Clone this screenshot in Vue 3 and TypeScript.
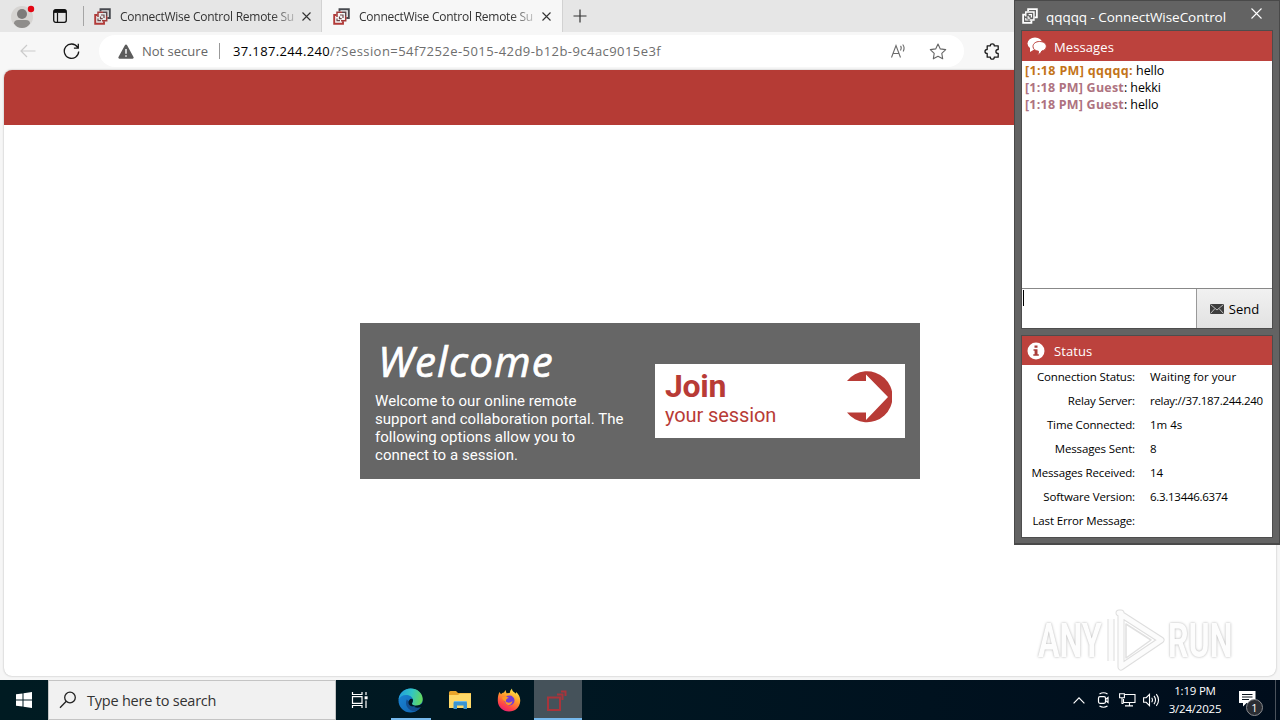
<script setup lang="ts">
interface BrowserTab {
  id: number
  title: string
  active: boolean
}

interface ChatLine {
  time: string
  author: string
  text: string
  host: boolean
}

interface StatusRow {
  label: string
  value: string
  numeric?: boolean
}

const tabs: BrowserTab[] = [
  { id: 1, title: 'ConnectWise Control Remote Su', active: false },
  { id: 2, title: 'ConnectWise Control Remote Su', active: true },
]

const chat: ChatLine[] = [
  { time: '[1:18 PM]', author: 'qqqqq:', text: 'hello', host: true },
  { time: '[1:18 PM]', author: 'Guest', text: 'hekki', host: false },
  { time: '[1:18 PM]', author: 'Guest', text: 'hello', host: false },
]

const status: StatusRow[] = [
  { label: 'Connection Status:', value: 'Waiting for your' },
  { label: 'Relay Server:', value: 'relay://37.187.244.240', numeric: true },
  { label: 'Time Connected:', value: '1m 4s' },
  { label: 'Messages Sent:', value: '8' },
  { label: 'Messages Received:', value: '14' },
  { label: 'Software Version:', value: '6.3.13446.6374', numeric: true },
  { label: 'Last Error Message:', value: '' },
]
</script>

<template>
  <div class="desktop">
    <section class="browser">
      <div class="tabstrip">
        <div class="profile">
          <svg width="28" height="28" viewBox="0 0 28 28">
            <circle cx="11" cy="15" r="11" fill="#d6d4d2" />
            <circle cx="11" cy="12" r="5" fill="#7d7b7a" />
            <path d="M3 21.500q0-3.500 4-3.500h8q4 0 4 3.500-3 4.500-8 4.500t-8-4.500z" fill="#8f8d8b" />
            <circle cx="20" cy="7" r="3.200" fill="#e30613" />
          </svg>
        </div>
        <svg class="workspace" width="14" height="14" viewBox="0 0 14 14" fill="none" stroke="#111">
          <rect x=".7" y=".7" width="12.600" height="12.600" rx="2" stroke-width="1.300" />
          <path d="M1 2.400h12" stroke-width="3" />
          <path d="M4.500 4v9" stroke-width="1.200" />
        </svg>
        <i class="divider"></i>
        <div v-for="tab in tabs" :key="tab.id" class="tab" :class="{ active: tab.active }">
          <svg class="favicon" width="17" height="17" viewBox="0 0 17 17" fill="none">
            <path d="M6.500 3.500V1.200h9.300V10h-2.500" stroke="#47494f" stroke-width="1.900" />
            <path d="M3.500 7H1.200v8.800H10v-2.500" stroke="#b23a38" stroke-width="1.900" />
            <path d="M4 9V4.300h5M12.700 8v4.700H8" stroke="#a23b3a" stroke-width="1.500" />
            <path d="M9 4.300h3.700V8" stroke="#5b474b" stroke-width="1.500" />
            <path d="M7 7h3v3M6.500 8.500v2.200h2.200M4 10.500v2.200h3" stroke="#6e4a4d" stroke-width="1.200" />
          </svg>
          <span class="tab-title">{{ tab.title }}</span>
          <svg class="tab-close" width="9" height="9" viewBox="0 0 9 9"><path d="M.5.500l8 8M8.500.500l-8 8" stroke="#333" stroke-width="1.100" /></svg>
        </div>
        <svg class="new-tab" width="14" height="14" viewBox="0 0 14 14"><path d="M7 .5v13M.5 7h13" stroke="#333" stroke-width="1.200" /></svg>
      </div>

      <div class="toolbar">
        <svg class="back" width="16" height="14" viewBox="0 0 16 14" fill="none" stroke="#cbcbcb" stroke-width="1.200"><path d="M15.500 7H1M7 1L1 7l6 6" /></svg>
        <svg class="reload" width="17" height="17" viewBox="0 0 17 17" fill="none" stroke="#1a1a1a" stroke-width="1.300"><path d="M14.500 4.200A7.200 7.200 0 1 0 15.700 8.500M15.300.800v4.300h-4.400" /></svg>
        <div class="address">
          <svg class="warn" width="16" height="15" viewBox="0 0 16 15"><path d="M8 .5q.7 0 1.100.8l6.400 11.800q.6 1.400-.9 1.600H1.400Q-.1 14.500.5 13.100L6.900 1.300Q7.300.5 8 .5z" fill="#5c5c5c" /><path d="M8 5v4.700M8 11.200v1.500" stroke="#fff" stroke-width="1.400" /></svg>
          <span class="insecure">Not secure</span>
          <i class="address-rule"></i>
          <span class="url"><b>37.187.244.240</b>/?Session=54f7252e-5015-42d9-b12b-9c4ac9015e3f</span>
          <svg class="read" width="18" height="16" viewBox="0 0 18 16" fill="none" stroke="#6b6b6b" stroke-width="1.100"><path d="M1.500 14.500l4.500-12 4.500 12M3 10.500h6M10.500 3q1.500 1.500 0 4.500M12.700 1.500q2.500 3 .5 7" /></svg>
          <svg class="star" width="18" height="17" viewBox="0 0 18 17" fill="none" stroke="#666" stroke-width="1.100" stroke-linejoin="round"><path d="M9 1l2.300 4.900 5.400.7-3.900 3.800.9 5.400L9 13.200l-4.700 2.600.9-5.400L1.300 6.600l5.400-.7z" /></svg>
        </div>
        <svg class="puzzle" width="17" height="17" viewBox="0 0 17 17" fill="none" stroke="#1c1c1c" stroke-width="1.300" stroke-linejoin="round"><path d="M3.200 2.800h3.200q-.1-2 1.900-2t1.900 2h4v3.700q-2.300 0-2.300 2t2.300 2v3.700h-4q.1 2-1.900 2t-1.900-2H3.200v-3.700q-2.200 0-2.200-2t2.200-2z" /></svg>
      </div>

      <main class="page">
        <header class="page-header"></header>
        <div class="page-body">
          <div class="welcome-panel">
            <div class="intro">
              <h1>Welcome</h1>
              <p>Welcome to our online remote<br />support and collaboration portal. The<br />following options allow you to<br />connect to a session.</p>
            </div>
            <div class="join">
              <div class="join-text">
                <strong>Join</strong>
                <span>your session</span>
              </div>
              <svg width="46" height="52" viewBox="0 0 46 52"><path d="M1 10A25.500 25.500 0 1 1 1 41.500H20V49L42 26 20 3.500V10z" fill="#b83b36" /></svg>
            </div>
          </div>
        </div>
      </main>
    </section>

    <div class="watermark">
      <span>ANY</span>
      <svg width="60" height="64" viewBox="0 0 60 64" fill="none" stroke-linejoin="round">
        <path d="M5 10v42M13 4L55 31 15 58V4z" stroke="#dedede" stroke-width="7" />
        <path d="M5 10v42M13 4L55 31 15 58V4z" stroke="#fcfcfc" stroke-width="5" />
        <path d="M20 15v34l25-18z" stroke="#e0e0e0" stroke-width="1.500" />
      </svg>
      <span>RUN</span>
    </div>

    <aside class="control">
      <div class="control-title">
        <svg width="16" height="16" viewBox="0 0 17 17" fill="none" stroke="#fff">
          <path d="M6.500 3.500V1.200h9.300V10h-2.500M3.500 7H1.200v8.800H10v-2.500" stroke-width="1.900" />
          <path d="M4 9V4.300h8.700v8.400H8" stroke-width="1.500" />
          <path d="M7 7h3v3M6.500 8.500v2.200h2.200M4 10.500v2.200h3" stroke-width="1.200" />
        </svg>
        <span>qqqqq - ConnectWiseControl</span>
        <svg class="control-close" width="11" height="11" viewBox="0 0 11 11"><path d="M.5.500l10 10M10.500.500l-10 10" stroke="#fff" stroke-width="1.100" /></svg>
      </div>
      <section class="messages">
        <h2>
          <svg width="20" height="19" viewBox="0 0 20 19"><ellipse cx="8" cy="6.500" rx="7.500" ry="6" fill="#fff" /><path d="M3 10v5l5-3z" fill="#fff" /><path d="M12.500 4.500c4 0 6.800 2 6.800 4.900 0 2.500-1.600 3.900-4.500 4.600-.8 1.800-2.500 3.400-4.300 4.300.8-1.500 1.200-2.600 1-4.100-3.500-.4-5.500-2.200-5.500-4.800 0-2.800 2.800-4.900 6.500-4.900z" fill="#fff" stroke="#bc423d" stroke-width="1" /></svg>
          Messages
        </h2>
        <div class="log">
          <div v-for="(line, i) in chat" :key="i" class="line" :class="{ host: line.host }">
            <b>{{ line.time }} {{ line.author }}</b><template v-if="!line.host">:</template>&nbsp;{{ line.text }}
          </div>
        </div>
        <div class="composer">
          <div class="entry"><i></i></div>
          <button class="send">
            <svg width="14" height="10" viewBox="0 0 14 10"><rect width="14" height="10" fill="#3d3d3d" /><path d="M.5.500L7 6l6.500-5.500M.5 9.500l4.500-5M13.500 9.500L9 4.500" stroke="#bdbdbd" fill="none" /></svg>
            Send
          </button>
        </div>
      </section>
      <section class="status">
        <h2>
          <svg width="18" height="18" viewBox="0 0 18 18"><circle cx="9" cy="9" r="8.500" fill="#fff" /><path d="M7.500 3.500h3v2.300h-3zM6.500 7.300h4v5h1.300v1.500H6.300v-1.500h1.300V8.800H6.500z" fill="#a93c39" /></svg>
          Status
        </h2>
        <dl>
          <template v-for="row in status" :key="row.label">
            <dt>{{ row.label }}</dt>
            <dd :class="{ numeric: row.numeric }">{{ row.value }}</dd>
          </template>
        </dl>
      </section>
    </aside>

    <footer class="taskbar">
      <div class="start">
        <svg width="16" height="16" viewBox="0 0 16 16" fill="#fff"><path d="M0 2.300L6.500 1.400V7.500H0zM7.500 1.200L16 0v7.500H7.500zM0 8.500h6.500v6.100L0 13.700zM7.500 8.500H16V16l-8.500-1.200z" /></svg>
      </div>
      <div class="search">
        <svg width="18" height="18" viewBox="0 0 18 18" fill="none" stroke="#222" stroke-width="1.300"><circle cx="11" cy="6.500" r="5.300" /><path d="M7.300 10.300L1 16.700" /></svg>
        <span>Type here to search</span>
      </div>
      <div class="apps">
        <div class="app task-view">
          <svg width="18" height="16" viewBox="0 0 18 16" fill="none" stroke="#fff" stroke-width="1.200"><path d="M1.500 0v2.500h9.500V0M1.500 16v-2.500h9.500V16M1.500 4.600h9.500v6.800H1.500zM15 0v3M15 8.500V16" /><path d="M13.600 4.300h3v3h-3z" fill="#fff" stroke="none" /></svg>
        </div>
        <div class="app running">
          <svg width="25" height="25" viewBox="0 0 25 25">
            <defs>
              <linearGradient id="edge-top" x1="0" y1=".4" x2="1" y2=".6"><stop offset="0" stop-color="#229fdc" /><stop offset=".5" stop-color="#32c5c4" /><stop offset="1" stop-color="#67d957" /></linearGradient>
              <linearGradient id="edge-low" x1="0" y1="0" x2="1" y2="1"><stop offset="0" stop-color="#1b88d8" /><stop offset="1" stop-color="#1061ad" /></linearGradient>
            </defs>
            <circle cx="12.500" cy="12.500" r="12" fill="url(#edge-low)" />
            <path d="M.6 11.500C1.500 4.500 7 .4 12.700.4c7 0 12 5 12 10.500 0 4.300-3.300 6.800-7 6.800-2.700 0-4.300-1-3.700-2.200 1-1.500 1.300-2.500 1-3.800C14.500 8.800 11.500 7 8 7 4.500 7 1.800 8.800.6 11.500z" fill="url(#edge-top)" />
            <path d="M8.700 11.500c-2.500 6 2 11.500 8.300 11.800 2.500-.8 4.800-2.600 6-4.800-5.500 2.400-11.700 0-11-4.600z" fill="#134f91" />
            <path d="M14.800 11.200c.7 2-.6 3.300-.8 4.200 0 1.500 2 2.500 5 2.200-2.800 1.900-8.500 1.100-8.500-3.100 0-2.500 2.300-4.800 4.300-3.300z" fill="#001722" />
            <path d="M18 17.700q4 0 7-3v4l-2 .3q-3.500 1.400-7 0z" fill="#001722" />
          </svg>
        </div>
        <div class="app">
          <svg width="22" height="18" viewBox="0 0 22 18"><path d="M0 1.500Q0 0 1.500 0H7l2 2h13v15H0z" fill="#e9a52b" /><path d="M0 4h9l2-1.500h11V17H0z" fill="#ffd968" /><path d="M4.500 18v-6q0-2 2-2h9.500q2 0 2 2v6h-3.500v-3.500h-6.500V18z" fill="#3b95d2" /><path d="M5 10.500h12.500" stroke="#70b9e5" /></svg>
        </div>
        <div class="app">
          <svg width="24" height="24" viewBox="0 0 24 24">
            <defs><linearGradient id="fox" x1=".75" y1="0" x2=".25" y2="1"><stop offset="0" stop-color="#fff04a" /><stop offset=".42" stop-color="#ff9a2b" /><stop offset=".75" stop-color="#ff4546" /><stop offset="1" stop-color="#e71b77" /></linearGradient></defs>
            <path d="M2.500 4L4 6.200Q5 4.600 7 4.500L8.500 2l1 3.300 3.200-.3Q13 2 15 .5c0 3 2 3.400 4 5.200V4c3 2.500 4.500 5.500 4.200 9.200C22.800 19.500 18 23.500 12 23.500S1 19 .8 13C.7 9.500 1.200 6.500 2.500 4z" fill="url(#fox)" />
            <circle cx="12.500" cy="12.500" r="5" fill="#743bd4" />
            <path d="M5 9.500q4-1.500 7 .5-3.500.5-3 3.500-3.500-1-4-4zM8 13q4 3.500 7.500 0-1 4.500-4.500 4-2.500-.5-3-4z" fill="#ff9a24" />
          </svg>
        </div>
        <div class="app running focused">
          <svg width="22" height="21" viewBox="0 0 22 21" fill="none" stroke="#a8343b" stroke-width="2"><path d="M2 7.500h12V20H2zM11 4.500h5.500V10M15 1.500h4.500V6" /></svg>
        </div>
      </div>
      <div class="tray">
        <svg width="12" height="7" viewBox="0 0 12 7" fill="none" stroke="#fff" stroke-width="1.200"><path d="M.6 6.300L6 .9l5.400 5.400" /></svg>
        <svg class="meet" width="13" height="16" viewBox="0 0 13 16" fill="none" stroke="#fff" stroke-width="1.200"><path d="M2.500 2q4-2.500 8 0M2.500 14q4 2.500 8 0M8.500 7.500l2.500-2v5l-2.500-2" /><rect x="1.500" y="4.700" width="7" height="6.600" rx="1.500" /></svg>
        <svg class="network" width="17" height="14" viewBox="0 0 17 14" fill="none" stroke="#fff" stroke-width="1.100"><path d="M6 1.500h10v8H4.500V6M10.500 9.500v3M6 12.900h8" /><path d="M.6.800h4.800v4H.6zM3 5v5.500h1.500" /></svg>
        <svg class="volume" width="17" height="14" viewBox="0 0 17 14" fill="none" stroke="#fff" stroke-width="1.100"><path d="M.6 4.700h2.600L6.500 1.400v11.200L3.200 9.300H.6zM8.700 4.700q1.500 2.300 0 4.600M11 2.900q3 4.100 0 8.200M13.300 1.200q4.500 5.800 0 11.600" /></svg>
        <div class="clock"><span>1:19 PM</span><span>3/24/2025</span></div>
        <div class="notify">
          <svg width="17" height="16" viewBox="0 0 17 16"><path d="M0 0h16.500v12H7.500L4 15.500V12H0z" fill="#fff" /><path d="M3 3.500h10.500M3 6h10.500M3 8.500h7" stroke="#08121c" /></svg>
          <span>1</span>
        </div>
        <i class="show-desktop"></i>
      </div>
    </footer>
  </div>
</template>

<style>
html,
body {
  overflow: hidden;
}
</style>

<style scoped>
.desktop {
  position: relative;
  display: grid;
  grid-template-rows: 680px 40px;
  width: 1280px;
  height: 720px;
  overflow: hidden;
  color: #000;
  font-family: "Open Sans", "Noto Sans", sans-serif;
}

svg {
  display: block;
  flex: none;
}

.browser {
  display: grid;
  grid-template-rows: 32px 38px 1fr;
  background: #f6f6f6;
}

.tabstrip {
  display: flex;
  align-items: center;
  background: #e6e6e6;
}

.profile {
  width: 28px;
  margin-left: 11px;
}

.workspace {
  margin-left: 14px;
}

.divider {
  width: 1px;
  height: 20px;
  margin-left: 16px;
  background: #a5a5a5;
}

.tab {
  display: flex;
  box-sizing: border-box;
  align-items: center;
  width: 237px;
  height: 32px;
  padding: 0 0 0 10px;
}

.tab.active {
  width: 242px;
  padding-left: 11px;
  border-left: 1px solid #d2d2d2;
  border-right: 1px solid #d2d2d2;
  background: #f7f7f7;
}

.tab-title {
  width: 176px;
  margin: 0 7px 0 9px;
  color: #333;
  font-size: 12px;
  letter-spacing: -.25px;
  white-space: nowrap;
  mask-image: linear-gradient(to right, #000 86%, rgb(0 0 0 / 20%));
}

.tab:not(.active) .tab-title {
  margin-right: 6px;
}

.new-tab {
  margin-left: 10px;
}

.toolbar {
  display: flex;
  align-items: center;
  background: #f7f7f7;
}

.back {
  margin-left: 20px;
}

.reload {
  margin-left: 27px;
}

.address {
  display: flex;
  box-sizing: border-box;
  align-items: center;
  width: 865px;
  height: 32px;
  margin-left: 19px;
  padding: 0 17px 0 19px;
  border-radius: 16px;
  background: #fff;
}

.insecure {
  width: 67px;
  margin-left: 8px;
  color: #666;
  font-size: 13px;
  white-space: nowrap;
}

.address-rule {
  width: 1px;
  height: 16px;
  margin: 0 13px 0 10px;
  background: #999;
}

.url {
  flex: 1;
  color: #6e6e6e;
  font-size: 13px;
  letter-spacing: .44px;
  white-space: nowrap;
}

.url b {
  color: #000;
  font-weight: 400;
  letter-spacing: .36px;
}

.read {
  margin-right: -1px;
}

.star {
  margin-left: 22px;
}

.puzzle {
  margin-left: 20px;
}

.page {
  display: grid;
  grid-template-rows: 55px 1fr;
  box-sizing: border-box;
  margin: 0 4px 4px;
  overflow: hidden;
  border-radius: 8px;
  background: #fff;
  box-shadow: 0 0 2px #aaa;
}

.page-header {
  background: #b53b35;
}

.page-body {
  display: flex;
  align-items: flex-start;
  justify-content: center;
  padding-top: 198px;
}

.welcome-panel {
  display: grid;
  grid-template-columns: 280px 250px;
  box-sizing: border-box;
  width: 560px;
  height: 156px;
  padding: 15px;
  background: #666;
  color: #fff;
}

.intro h1 {
  height: 52px;
  margin: 0;
  padding-left: 3px;
  font: italic 500 42px/45px "Open Sans", sans-serif;
  letter-spacing: 1.200px;
  white-space: nowrap;
  -webkit-text-stroke: .7px #fff;
}

.intro p {
  margin: 2px 0 0;
  font: 15px/18px Roboto, sans-serif;
  letter-spacing: .05px;
  white-space: nowrap;
}

.join {
  display: flex;
  box-sizing: border-box;
  justify-content: space-between;
  height: 74px;
  margin-top: 26px;
  padding: 7px 13px 0 10px;
  background: #fff;
  color: #b83b36;
  font-family: Roboto, sans-serif;
}

.join-text {
  display: flex;
  flex-direction: column;
}

.join strong {
  font-size: 32px;
  line-height: 31px;
  letter-spacing: -.3px;
}

.join span {
  font-size: 20px;
  line-height: 26px;
  letter-spacing: -.1px;
}

.watermark {
  position: absolute;
  top: 609px;
  left: 1038px;
  display: flex;
  align-items: center;
  gap: 2px;
  color: #fdfdfd;
  font: 700 48px/64px Roboto, sans-serif;
  text-shadow: 0 0 3px #aaa;
}

.watermark span {
  width: 66px;
  transform: scaleX(.67);
  transform-origin: left;
}

.control {
  position: absolute;
  top: 0;
  left: 1014px;
  box-sizing: border-box;
  width: 266px;
  height: 545px;
  padding: 0 7px 0 6px;
  border: solid #494949;
  border-width: 1px 1px 2px;
  background: #636363;
}

.control-title {
  display: flex;
  align-items: center;
  height: 30px;
  padding-left: 1px;
  color: #fff;
  font-size: 13.500px;
}

.control-title span {
  flex: 1;
  margin-left: 8px;
  padding-top: 2px;
  letter-spacing: -.05px;
  white-space: nowrap;
}

.control-close {
  margin: 0 10px 6px 0;
}

.messages,
.status {
  margin-left: 1px;
  outline: 1px solid #4d4d4d;
  background: #fff;
}

.messages {
  height: 297px;
}

.status {
  height: 201px;
  margin-top: 8px;
}

h2 {
  display: flex;
  align-items: center;
  height: 29px;
  margin: 0;
  padding-left: 5px;
  background: #bc423d;
  color: #fff;
  font-size: 13px;
  font-weight: 400;
  letter-spacing: .1px;
}

.messages h2 {
  box-sizing: border-box;
  height: 30px;
  padding-top: 1px;
}

h2 svg {
  margin-right: 7px;
}

.status h2 svg {
  margin-right: 9px;
}

.log {
  box-sizing: border-box;
  height: 227px;
  padding: 1px 3px;
}

.line {
  font: 12.500px/17px "Open Sans", sans-serif;
  letter-spacing: -.1px;
  white-space: nowrap;
}

.line b {
  color: #ae7280;
  letter-spacing: .22px;
}

.line.host b {
  color: #c37419;
  letter-spacing: .34px;
}

.composer {
  display: grid;
  grid-template-columns: 1fr 76px;
  box-sizing: border-box;
  height: 40px;
  border-top: 1px solid #888;
}

.entry {
  padding: 1px;
}

.entry i {
  display: block;
  width: 1px;
  height: 16px;
  background: #000;
}

.send {
  display: flex;
  align-items: center;
  justify-content: center;
  gap: 5px;
  margin: 0;
  padding: 0;
  border: 0;
  border-left: 1px solid #999;
  background: linear-gradient(#f1f1f1, #e2e2e2);
  color: #000;
  font: 13px "Open Sans", sans-serif;
}

dl {
  display: grid;
  grid-template-columns: 113px 1fr;
  grid-auto-rows: 24px;
  column-gap: 15px;
  margin: 0;
  font-size: 11.500px;
  line-height: 24px;
  white-space: nowrap;
}

dt {
  text-align: right;
  letter-spacing: -.14px;
}

dd {
  margin: 0;
}

dd.numeric {
  letter-spacing: -.28px;
}

.taskbar {
  display: flex;
  background: linear-gradient(to right, #001b22, #001722 45%, #000d1c);
  color: #fff;
}

.start {
  display: grid;
  width: 48px;
  place-items: center;
}

.search {
  display: flex;
  box-sizing: border-box;
  align-items: center;
  width: 288px;
  padding-left: 10px;
  border: 1px solid #c4c4c4;
  background: #f1f1f1;
  color: #333;
  font-size: 14.500px;
}

.search span {
  margin-left: 10px;
  letter-spacing: -.22px;
  white-space: nowrap;
}

.apps {
  display: flex;
}

.app {
  display: grid;
  box-sizing: border-box;
  width: 49px;
  place-items: center;
}

.running {
  position: relative;
}

.running::after {
  position: absolute;
  bottom: 0;
  left: 5px;
  width: 40px;
  height: 2px;
  background: #76b9ed;
  content: "";
}

.task-view {
  width: 50px;
  padding-right: 2px;
}

.app.focused {
  width: 48px;
  margin-left: 1px;
  padding-right: 3px;
  background: #45525a;
}

.focused::after {
  left: 0;
  width: 48px;
}

.tray {
  display: flex;
  align-items: center;
  margin-left: auto;
}

.meet {
  margin-left: 12px;
}

.network {
  margin-left: 9px;
}

.volume {
  margin-left: 7px;
}

.clock {
  display: flex;
  flex-direction: column;
  align-items: center;
  width: 54px;
  margin-left: 8px;
  font-size: 11.500px;
  line-height: 18px;
  letter-spacing: -.22px;
  white-space: nowrap;
}

.notify {
  position: relative;
  margin: 0 19px 2px 17px;
}

.notify span {
  position: absolute;
  top: 8px;
  left: 7px;
  box-sizing: border-box;
  width: 17px;
  height: 17px;
  border: 1px solid #8a8c90;
  border-radius: 50%;
  background: #2a2d33;
  font-size: 11px;
  line-height: 15px;
  text-align: center;
}

.show-desktop {
  width: 4px;
  height: 40px;
  border-left: 1px solid #4a525c;
}
</style>
